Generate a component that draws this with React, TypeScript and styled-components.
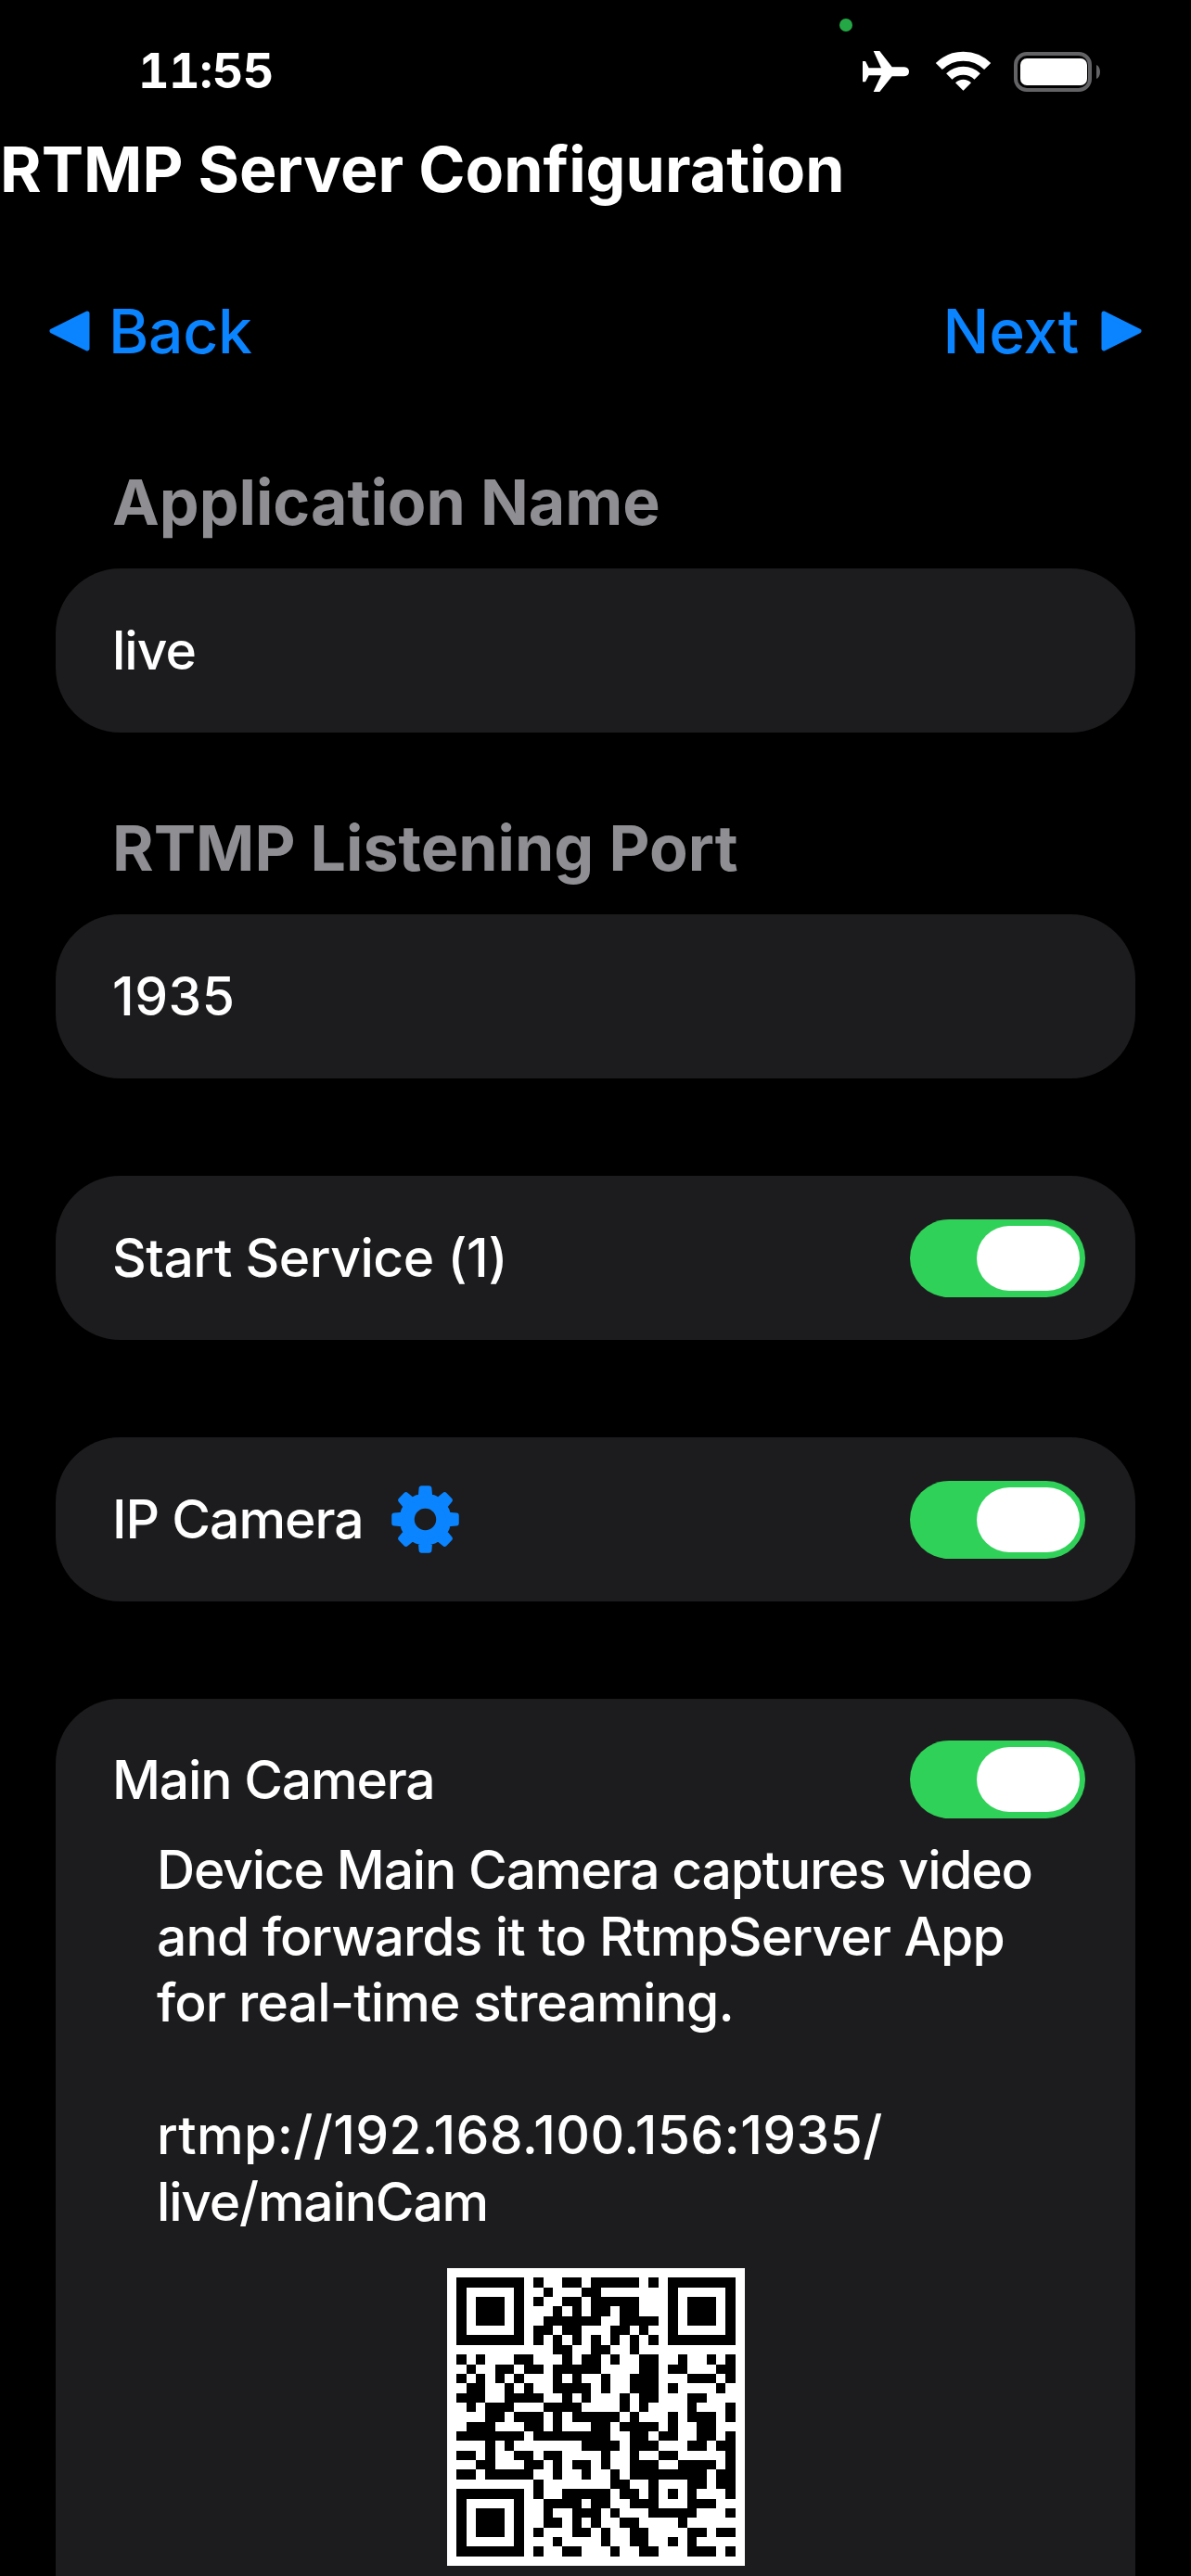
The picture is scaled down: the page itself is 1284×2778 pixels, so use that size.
import React from "react";
import styled, { createGlobalStyle } from "styled-components";

const Global = createGlobalStyle`
  html, body { margin: 0; padding: 0; background: #000; }
  body { font-family: Inter, "Liberation Sans", sans-serif; }
`;

const Page = styled.div`
  width: 1284px;
  height: 2778px;
  overflow: hidden;
  position: relative;
  background: #000;
  color: #fff;
`;

const StatusBar = styled.div`
  height: 50px;
  padding: 52px 98px 0 149px;
  display: flex;
  align-items: center;
  justify-content: space-between;
`;

const Time = styled.div`
  font-size: 52px;
  line-height: 50px;
  font-weight: 700;
  letter-spacing: -0.5px;
  font-variant-numeric: tabular-nums;
`;

const StatusIcons = styled.div`
  display: flex;
  align-items: center;
  gap: 26px;
`;

const Plane = styled.svg`
  margin-right: 4px;
`;

const PrivacyDot = styled.div`
  position: absolute;
  left: 905px;
  top: 20px;
  width: 14px;
  height: 14px;
  border-radius: 50%;
  background: #24a845;
`;

const Title = styled.h1`
  margin: 40px 0 0;
  font-size: 68px;
  line-height: 80px;
  font-weight: 700;
  white-space: nowrap;
`;

const Nav = styled.nav`
  margin-top: 95px;
  padding: 0 53px;
  height: 80px;
  display: flex;
  justify-content: space-between;
  align-items: center;
`;

const NavButton = styled.div<{ $gap: number }>`
  display: flex;
  align-items: center;
  gap: ${(p) => p.$gap}px;
  color: #0a84ff;
  font-size: 66px;
  font-weight: 500;
  line-height: 80px;
  letter-spacing: -0.3px;
`;

const Form = styled.div`
  margin-top: 109px;
  padding: 0 60px;
  display: flex;
  flex-direction: column;
`;

const Label = styled.div`
  padding-left: 61px;
  height: 70px;
  font-size: 68px;
  line-height: 70px;
  font-weight: 700;
  color: #8e8e93;
  margin-bottom: 37px;
`;

const Field = styled.div<{ $gap: number }>`
  height: 177px;
  box-sizing: border-box;
  border-radius: 70px;
  background: #1c1c1e;
  padding: 0 54px 0 61px;
  display: flex;
  align-items: center;
  justify-content: space-between;
  font-size: 57px;
  font-weight: 500;
  letter-spacing: -1px;
  margin-bottom: ${(p) => p.$gap}px;
`;

const Digits = styled.span`
  letter-spacing: 0.5px;
`;

const ServiceName = styled.span`
  letter-spacing: -0.5px;
`;

const FieldLead = styled.div`
  display: flex;
  align-items: center;
  gap: 30px;
`;

const Track = styled.div`
  width: 189px;
  height: 84px;
  box-sizing: border-box;
  border-radius: 42px;
  background: #30d158;
  padding: 7px 6px;
  display: flex;
  justify-content: flex-end;
`;

const Thumb = styled.div`
  width: 111px;
  height: 70px;
  border-radius: 35px;
  background: #fff;
`;

const CameraCard = styled.div`
  border-radius: 70px 70px 0 0;
  background: #1c1c1e;
  padding: 45px 54px 60px 61px;
  font-size: 57px;
  font-weight: 500;
  letter-spacing: -1.2px;
  height: 1100px;
`;

const CameraHead = styled.div`
  display: flex;
  align-items: center;
  justify-content: space-between;
`;

const Description = styled.div`
  margin: 20px 0 35px 48px;
  line-height: 71.6px;
  white-space: nowrap;
`;

const LooseLine = styled.span`
  letter-spacing: -0.85px;
`;

const Url = styled.span`
  letter-spacing: 0.35px;
`;

const QrBox = styled.div`
  display: flex;
  justify-content: center;
  margin-left: -7px;
`;

const spans: number[][][] = [
  [[8,8],[11,12],[14,18],[20,20]],
  [[9,9],[13,14]],
  [[8,8],[11,12],[14,18]],
  [[10,10],[12,12],[14,15],[17,18]],
  [[9,14],[17,20]],
  [[8,9],[11,12],[16,17],[19,19]],
  [[8,8],[10,10],[12,12],[14,14],[16,16],[18,18],[20,20]],
  [[10,11],[14,15],[18,18]],
  [[0,0],[2,2],[6,7],[11,11],[13,14],[16,16],[19,20],[23,23],[26,26],[28,28]],
  [[1,1],[4,5],[7,8],[10,14],[19,20],[22,23],[27,28]],
  [[0,0],[2,2],[4,4],[6,6],[10,10],[12,12],[15,15],[18,20],[24,26],[28,28]],
  [[1,2],[5,5],[7,7],[10,13],[15,15],[18,20],[22,22],[27,27]],
  [[0,2],[5,8],[11,11],[13,13],[17,17],[19,20],[24,25]],
  [[1,1],[3,5],[9,12],[17,17],[19,19],[24,24],[28,28]],
  [[3,4],[6,8],[10,10],[12,16],[18,18],[22,22],[24,26],[28,28]],
  [[1,3],[7,8],[10,10],[14,15],[17,20],[22,22],[25,26]],
  [[0,6],[8,15],[18,19],[21,22],[25,26],[28,28]],
  [[3,3],[5,5],[13,16],[18,20],[24,25],[27,28]],
  [[0,1],[3,3],[6,7],[9,10],[15,15],[18,18],[21,22],[28,28]],
  [[2,3],[7,8],[10,10],[12,13],[15,15],[18,20],[23,26],[28,28]],
  [[0,1],[3,7],[10,10],[13,13],[16,16],[18,25],[27,28]],
  [[8,8],[16,17],[20,20],[24,25],[27,28]],
  [[8,8],[11,15],[17,18],[20,20],[22,22],[24,24],[28,28]],
  [[9,12],[14,15],[18,20],[24,26]],
  [[9,9],[12,14],[16,16],[20,24],[28,28]],
  [[9,10],[12,12],[14,14],[17,18],[23,23]],
  [[8,8],[12,13],[15,15],[18,19],[24,25],[27,28]],
  [[10,10],[15,15],[18,19],[22,22],[24,24]],
  [[8,8],[11,12],[16,16],[19,20],[24,26],[28,28]],
];

const finderRows: number[][][] = [
  [[0,6]], [[0,0],[6,6]], [[0,0],[2,4],[6,6]], [[0,0],[2,4],[6,6]], [[0,0],[2,4],[6,6]], [[0,0],[6,6]], [[0,6]],
];

function QrCode() {
  const rects: React.ReactNode[] = [];
  spans.forEach((row, y) => {
    const all = [...row];
    if (y < 7) {
      finderRows[y].forEach(([a, b]) => { all.push([a, b]); all.push([a + 22, b + 22]); });
    }
    if (y >= 22) {
      finderRows[y - 22].forEach(([a, b]) => all.push([a, b]));
    }
    all.forEach(([a, b]) => {
      rects.push(<rect key={`${y}-${a}`} x={a + 1} y={y + 1} width={b - a + 1} height={1} />);
    });
  });
  return (
    <svg width="321" height="321" viewBox="0 0 31 31" shapeRendering="crispEdges">
      <rect width="31" height="31" fill="#fff" />
      <g fill="#000">{rects}</g>
    </svg>
  );
}

function gearPath(cx: number, cy: number, outer: number, root: number) {
  const teeth = 8;
  const pts: string[] = [];
  for (let i = 0; i < teeth; i++) {
    const a = (i / teeth) * Math.PI * 2 - Math.PI / 2;
    const step = (Math.PI * 2) / teeth;
    const pairs: [number, number][] = [
      [a - step * 0.5, root],
      [a - step * 0.24, root],
      [a - step * 0.15, outer],
      [a + step * 0.15, outer],
      [a + step * 0.24, root],
    ];
    pairs.forEach(([t, r]) => {
      pts.push(`${(cx + Math.cos(t) * r).toFixed(2)} ${(cy + Math.sin(t) * r).toFixed(2)}`);
    });
  }
  return `M${pts.join("L")}Z`;
}

const Gear = () => (
  <svg width="73" height="73" viewBox="0 0 73 73">
    <path d={gearPath(36.5, 36.5, 33.5, 25)} fill="#0a84ff" stroke="#0a84ff" strokeWidth="6" strokeLinejoin="round" />
    <circle cx="36.5" cy="36.5" r="11.7" fill="#1c1c1e" />
  </svg>
);

const PlaneIcon = () => (
  <Plane width="50" height="44" viewBox="0 0 150 132">
    <path fill="#fff" d="M0 33L9 33L20 55L60 55L35 0L55 0L95 52L135 52Q150 54 150 67Q150 80 135 82L95 82L55 132L35 132L60 79L20 79L9 100L0 100Z" />
  </Plane>
);

const Wifi = () => (
  <svg width="57" height="42" viewBox="0 0 57 42" overflow="visible">
    <g fill="none" stroke="#fff" strokeWidth="10">
      <path d="M2.34 15.54A37 37 0 0 1 54.66 15.54" />
      <path strokeWidth="9" d="M13.3 26.5A21.5 21.5 0 0 1 43.7 26.5" />
    </g>
    <path fill="#fff" d="M28.5 41.7L20 33.2A12 12 0 0 1 37 33.2Z" />
  </svg>
);

const Battery = () => (
  <svg width="93" height="43" viewBox="0 0 93 43">
    <rect x="2" y="2" width="80" height="39" rx="12" fill="none" stroke="#636366" strokeWidth="4" />
    <rect x="7" y="7" width="72" height="29" rx="7" fill="#fff" />
    <path d="M89 14C91.5 15 93 18 93 21.5C93 25 91.5 28 89 29Z" fill="#636366" />
  </svg>
);

const LeftArrow = () => (
  <svg width="44" height="44" viewBox="0 0 44 44">
    <path d="M41 3L3 22L41 41Z" fill="#0a84ff" stroke="#0a84ff" strokeWidth="5" strokeLinejoin="round" />
  </svg>
);

const RightArrow = () => (
  <svg width="44" height="44" viewBox="0 0 44 44">
    <path d="M3 3L41 22L3 41Z" fill="#0a84ff" stroke="#0a84ff" strokeWidth="5" strokeLinejoin="round" />
  </svg>
);

const Toggle = () => (
  <Track>
    <Thumb />
  </Track>
);

export default function App() {
  return (
    <Page>
      <Global />
      <PrivacyDot />
      <StatusBar>
        <Time>11:55</Time>
        <StatusIcons>
          <PlaneIcon />
          <Wifi />
          <Battery />
        </StatusIcons>
      </StatusBar>
      <Title>RTMP Server Configuration</Title>
      <Nav>
        <NavButton $gap={20}>
          <LeftArrow />
          <span>Back</span>
        </NavButton>
        <NavButton $gap={24}>
          <span>Next</span>
          <RightArrow />
        </NavButton>
      </Nav>
      <Form>
        <Label>Application Name</Label>
        <Field $gap={89}>live</Field>
        <Label>RTMP Listening Port</Label>
        <Field $gap={105}>
          <Digits>1935</Digits>
        </Field>
        <Field $gap={105}>
          <ServiceName>Start Service (1)</ServiceName>
          <Toggle />
        </Field>
        <Field $gap={105}>
          <FieldLead>
            <span>IP Camera</span>
            <Gear />
          </FieldLead>
          <Toggle />
        </Field>
        <CameraCard>
          <CameraHead>
            <span>Main Camera</span>
            <Toggle />
          </CameraHead>
          <Description>
            Device Main Camera captures video
            <br />
            <LooseLine>and forwards it to RtmpServer App</LooseLine>
            <br />
            <LooseLine>for real-time streaming.</LooseLine>
            <br />
            <br />
            <Url>rtmp://192.168.100.156:1935/</Url>
            <br />
            live/mainCam
          </Description>
          <QrBox>
            <QrCode />
          </QrBox>
        </CameraCard>
      </Form>
    </Page>
  );
}
